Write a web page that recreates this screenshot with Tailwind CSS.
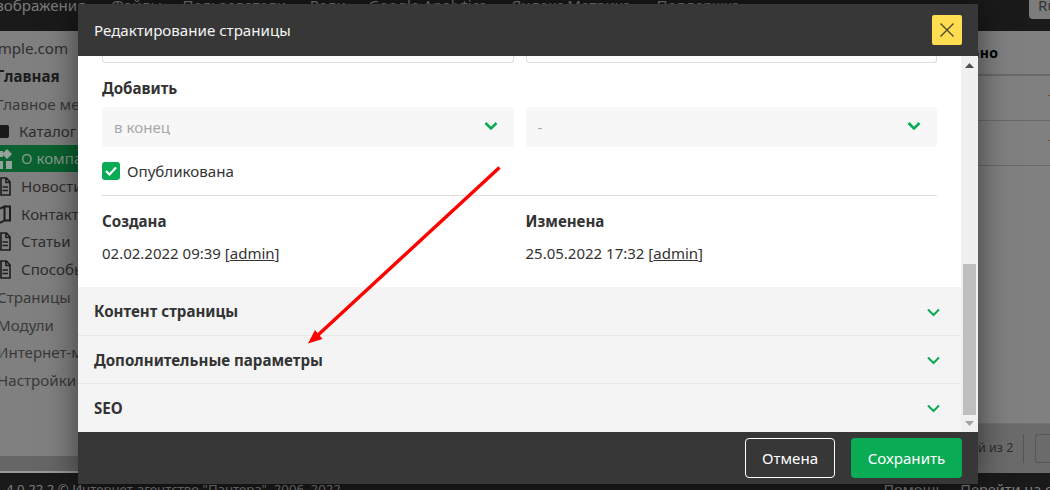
<!DOCTYPE html>
<html lang="ru">
<head>
<meta charset="utf-8">
<script src="https://cdn.jsdelivr.net/npm/@tailwindcss/browser@4"></script>
</head>
<body class="m-0">
<div class="relative w-[1050px] h-[490px] overflow-hidden bg-[#808080] font-['Noto_Sans',sans-serif] text-[15.12px] text-[#333]">
  <!-- background page -->
  <div class="flex flex-col h-full">
    <div class="h-[31px] bg-[#1a1a1a] shrink-0 relative overflow-hidden text-[#7c7c7c] leading-[10px]">
      <div class="flex -ml-[15px] whitespace-nowrap gap-[25.500px]">
        <span>Изображения</span><span>Файлы</span><span class="-ml-[5px]">Пользователи</span><span class="-ml-[2px]">Роли</span><span class="-ml-[3px]">Google Analytics</span><span>Яндекс.Метрика</span><span>Поддержка</span>
      </div>
      <div class="absolute right-0 top-0 w-[21px] h-[19px] bg-[#7c7c7c] rounded-bl-[4px] text-[#333] pl-[9px] leading-[10px] overflow-hidden">Ru</div>
    </div>
    <div class="flex flex-1 min-h-0">
      <div class="w-[78px] shrink-0 flex flex-col">
        <div class="flex-1 overflow-hidden whitespace-nowrap text-[#2e2e2e] pt-[7px]">
          <div class="h-[20px] leading-[20px] -ml-[27px] text-[#303030]">example.com</div>
          <div class="h-[28px] leading-[28px] mt-[4px] -ml-[4px] font-bold text-[#1d1d1d]">Главная</div>
          <div class="h-[28px] leading-[28px] -ml-[4px] text-[#3a3a3a]">Главное меню</div>
          <div class="h-[27px] flex items-center">
            <span class="w-[9px] h-[13px] bg-[#1a1a1a] rounded-r-[2px] mr-[10px]"></span><span>Каталог</span>
          </div>
          <div class="h-[27px] flex items-center bg-[#09622f] text-[#7f9a88]">
            <svg class="w-[12px] h-[20px] mr-[9px] shrink-0" viewBox="0 0 12 20" fill="#93a59b"><path d="M7 0l5 5-5 5-5-5zM-3 2h6v6h-6zM-3 12h6v8h-6zM6 12h6v8H6z"/></svg><span>О компании</span>
          </div>
          <div class="h-[28px] flex items-center">
            <svg class="w-[11px] h-[19px] mr-[10px] shrink-0" viewBox="0 0 11 19" fill="none" stroke="#1c1c1c" stroke-width="1.600"><path d="M1 1h5.500L10 5v13H1zM6 1v4.500h4M2.500 10H8M2.500 13.500H8"/></svg><span>Новости</span>
          </div>
          <div class="h-[28px] flex items-center">
            <svg class="w-[11px] h-[19px] mr-[10px] shrink-0" viewBox="0 0 11 19" fill="none" stroke="#1c1c1c" stroke-width="2"><path d="M0 3.500l4.500-2v14L0 18M4.500 1.500H10v14H4.500"/></svg><span>Контакты</span>
          </div>
          <div class="h-[27px] flex items-center">
            <svg class="w-[11px] h-[19px] mr-[10px] shrink-0" viewBox="0 0 11 19" fill="none" stroke="#1c1c1c" stroke-width="1.600"><path d="M1 1h5.500L10 5v13H1zM6 1v4.500h4M2.500 10H8M2.500 13.500H8"/></svg><span>Статьи</span>
          </div>
          <div class="h-[28px] flex items-center">
            <svg class="w-[11px] h-[19px] mr-[10px] shrink-0" viewBox="0 0 11 19" fill="none" stroke="#1c1c1c" stroke-width="1.600"><path d="M1 1h5.500L10 5v13H1zM6 1v4.500h4M2.500 10H8M2.500 13.500H8"/></svg><span>Способы</span>
          </div>
          <div class="h-[28px] leading-[28px] -ml-[3px] text-[#3a3a3a]">Страницы</div>
          <div class="h-[28px] leading-[28px] -ml-[3px] text-[#3a3a3a]">Модули</div>
          <div class="h-[27px] leading-[27px] -ml-[3px] text-[#3a3a3a]">Интернет-магазин</div>
          <div class="h-[28px] leading-[28px] -ml-[3px] text-[#3a3a3a]">Настройки</div>
        </div>
        <div class="h-[17px] bg-[#666] border-b-2 border-[#999] shrink-0"></div>
      </div>
      <div class="flex-1"></div>
      <div class="w-[72px] shrink-0 flex flex-col">
        <div class="h-[45px] border-b-[2px] border-[#6a6a6a] leading-[44px] -ml-[7px] text-black font-bold text-[14px] tracking-[0.3px] whitespace-nowrap">ано</div>
        <div class="h-[45px] border-b border-[#6a6a6a] flex justify-end items-center"><span class="w-[2px] h-[1px] mb-[6px] bg-[#75503a]"></span></div>
        <div class="h-[45px] border-b border-[#6a6a6a] flex justify-end items-center"><span class="w-[2px] h-[1px] mb-[6px] bg-[#75503a]"></span></div>
        <div class="flex-1"></div>
        <div class="h-[50px] mt-auto bg-[#6b6b6b] border-t border-[#727272] flex items-center text-[#2e2e2e] whitespace-nowrap">
          <span class="text-[12.500px] w-[45px]">й из 2</span>
          <span class="w-[1px] h-[29px] bg-[#555]"></span>
          <span class="ml-[11px] flex-1 h-[29px] border border-[#585858] border-r-0 rounded-l-[3px]"></span>
        </div>
      </div>
    </div>
    <div class="h-[17px] bg-[#1a1a1a] shrink-0 overflow-hidden flex text-[#7c7c7c] leading-[32px] whitespace-nowrap pl-[6px]">
      <span class="text-[13.200px]">4.0.22.2 © Интернет-агентство "Пантера", 2006–2022</span>
      <span class="ml-auto text-[14.500px]">Помощь</span>
      <span class="ml-[17px] -mr-[26px] text-[14.500px]">Перейти на сайт</span>
    </div>
  </div>

  <!-- modal -->
  <div class="absolute left-[78px] top-[4px] w-[900px] h-[480px] flex flex-col bg-white shadow-[0_0_32px_rgba(0,0,0,0.55)]">
    <div class="h-[52px] shrink-0 bg-[#373737] flex items-center justify-between px-[16px]">
      <span class="text-[#f4f4f4]">Редактирование страницы</span>
      <span class="w-[30px] h-[30px] bg-[#ffdc50] rounded-[2px] flex items-center justify-center">
        <svg class="w-[14px] h-[14px]" viewBox="0 0 14 14" fill="none" stroke="#4a4a30" stroke-width="1.400"><path d="M0.500 0.500l13 13M13.500 0.500l-13 13"/></svg>
      </span>
    </div>
    <div class="flex flex-1 min-h-0">
      <div class="flex-1 min-w-0 flex flex-col">
        <div class="h-[231px] px-[24px] bg-white">
          <div class="grid grid-cols-2 gap-x-[12px] w-[835px]">
            <div class="h-[7px] border border-t-0 border-[#ddd] rounded-b-[3px]"></div>
            <div class="h-[7px] border border-t-0 border-[#ddd] rounded-b-[3px]"></div>
          </div>
          <div class="mt-[15px] font-bold leading-[20px]">Добавить</div>
          <div class="grid grid-cols-2 gap-x-[12px] w-[835px] mt-[9px]">
            <div class="h-[40px] bg-[#f7f7f7] rounded-[4px] flex items-center justify-between pl-[12px] pr-[16px] text-[#a8a8a8]">
              <span>в конец</span>
              <svg class="w-[14px] h-[10px] mb-[2px]" viewBox="0 0 14 10" fill="none" stroke="#0aab55" stroke-width="2.600"><path d="M1.500 2l5.500 5.500L12.500 2"/></svg>
            </div>
            <div class="h-[40px] bg-[#f7f7f7] rounded-[4px] flex items-center justify-between pl-[12px] pr-[16px] text-[#a8a8a8]">
              <span>-</span>
              <svg class="w-[14px] h-[10px] mb-[2px]" viewBox="0 0 14 10" fill="none" stroke="#0aab55" stroke-width="2.600"><path d="M1.500 2l5.500 5.500L12.500 2"/></svg>
            </div>
          </div>
          <div class="flex items-center mt-[15px] h-[18px]">
            <span class="w-[18px] h-[18px] bg-[#0aab55] rounded-[3px] flex items-center justify-center mr-[7px]">
              <svg class="w-[12px] h-[10px]" viewBox="0 0 12 10" fill="none" stroke="#fff" stroke-width="2.200"><path d="M1 5l3.500 3.500L11 1.500"/></svg>
            </span>
            <span>Опубликована</span>
          </div>
          <div class="w-[835px] h-[1px] bg-[#ddd] mt-[15px]"></div>
          <div class="grid grid-cols-2 gap-x-[12px] w-[835px] mt-[15px]">
            <div>
              <div class="font-bold leading-[20px]">Создана</div>
              <div class="mt-[12px] leading-[20px] text-[15px]">02.02.2022 09:39 [<span class="underline">admin</span>]</div>
            </div>
            <div>
              <div class="font-bold leading-[20px]">Изменена</div>
              <div class="mt-[12px] leading-[20px] text-[15px]">25.05.2022 17:32 [<span class="underline">admin</span>]</div>
            </div>
          </div>
        </div>
        <div class="flex-1 bg-[#f4f4f4] flex flex-col">
          <div class="h-[48px] flex items-center justify-between pl-[16px] pr-[21px] font-bold"><span class="mt-[1px]">Контент страницы</span>
            <svg class="w-[13px] h-[9px] mt-[2px]" viewBox="0 0 13 9" fill="none" stroke="#0aab55" stroke-width="2"><path d="M1 1.500l5.500 5.500L12 1.500"/></svg>
          </div>
          <div class="h-[48px] flex items-center justify-between pl-[16px] pr-[21px] font-bold border-t border-[#e8e8e8]"><span class="mt-[1px]">Дополнительные параметры</span>
            <svg class="w-[13px] h-[9px] mt-[1px]" viewBox="0 0 13 9" fill="none" stroke="#0aab55" stroke-width="2"><path d="M1 1.500l5.500 5.500L12 1.500"/></svg>
          </div>
          <div class="flex-1 flex items-center justify-between pl-[16px] pr-[21px] font-bold border-t border-[#e8e8e8]"><span class="mt-[1px]">SEO</span>
            <svg class="w-[13px] h-[9px]" viewBox="0 0 13 9" fill="none" stroke="#0aab55" stroke-width="2"><path d="M1 1.500l5.500 5.500L12 1.500"/></svg>
          </div>
        </div>
      </div>
      <div class="w-[17px] shrink-0 bg-[#f0f0f0] flex flex-col items-center">
        <svg class="w-[9px] h-[5px] mt-[7px]" viewBox="0 0 9 5" fill="#505050"><path d="M4.500 0L9 5H0z"/></svg>
        <div class="flex-1"></div>
        <div class="w-[13px] h-[151px] bg-[#bfbfbf]"></div>
        <svg class="w-[9px] h-[5px] mt-[6px] mb-[6px]" viewBox="0 0 9 5" fill="#a3a3a3"><path d="M0 0h9L4.500 5z"/></svg>
      </div>
    </div>
    <div class="h-[52px] shrink-0 bg-[#373737] flex items-center justify-end gap-[16px] pr-[16px]">
      <span class="w-[90px] h-[40px] border border-white rounded-[4px] text-white flex items-center justify-center">Отмена</span>
      <span class="w-[111px] h-[40px] bg-[#0aab55] rounded-[4px] text-white flex items-center justify-center">Сохранить</span>
    </div>
  </div>

  <!-- annotation arrow -->
  <svg class="absolute left-0 top-0 pointer-events-none" width="1050" height="490" viewBox="0 0 1050 490">
    <path d="M499.500 167.500L318 335" stroke="#fe0000" stroke-width="3.400" fill="none"/>
    <path d="M308 343.500L315 330 L322.500 339z" fill="#fe0000"/>
  </svg>
</div>
</body>
</html>
